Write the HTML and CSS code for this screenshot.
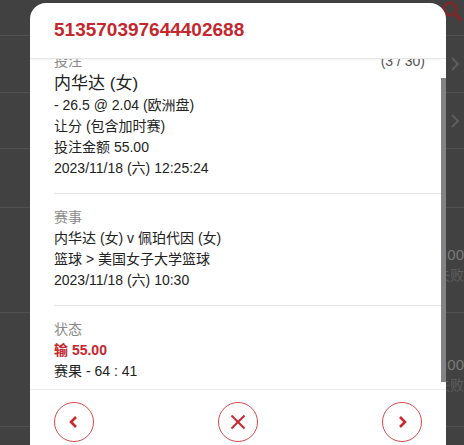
FILE: index.html
```html
<!DOCTYPE html>
<html lang="zh-CN">
<head>
<meta charset="utf-8">
<title>注单详情</title>
<link rel="stylesheet" href="styles.css">
</head>
<body>
<div class="page">
  <div class="topbar">
    <svg class="search" width="22" height="22" viewBox="0 0 22 22"><circle cx="9" cy="8" r="6" fill="none" stroke="#7a2a2c" stroke-width="3"/><line x1="13.5" y1="12.5" x2="19.5" y2="18.5" stroke="#7a2a2c" stroke-width="3.4" stroke-linecap="round"/></svg>
  </div>
  <div class="row r1"><svg class="chev" width="10" height="16" viewBox="0 0 10 16"><polyline points="2,2 8,8 2,14" fill="none" stroke="#5e5e5e" stroke-width="2"/></svg></div>
  <div class="row r2"><svg class="chev" width="10" height="16" viewBox="0 0 10 16"><polyline points="2,2 8,8 2,14" fill="none" stroke="#5e5e5e" stroke-width="2"/></svg></div>
  <div class="row r3"></div>
  <div class="row r4"><div class="amt"><span class="amt-v">0.00</span><span class="amt-s">失败</span></div></div>
  <div class="row r5"><div class="amt"><span class="amt-v">0.00</span><span class="amt-s">失败</span></div></div>
  <div class="row r6"></div>
</div>

<div class="modal">
  <div class="modal-head"><h1 class="ticket">513570397644402688</h1></div>
  <div class="modal-body">
    <div class="scroll" id="scrollArea">
      <section class="sec">
        <div class="sec-top"><span class="label">投注</span><span class="count">(3 / 30)</span></div>
        <div class="big">内华达 (女)</div>
        <div class="line">- 26.5 @ 2.04 (欧洲盘)</div>
        <div class="line">让分 (包含加时赛)</div>
        <div class="line">投注金额 55.00</div>
        <div class="line">2023/11/18 (六) 12:25:24</div>
      </section>
      <section class="sec">
        <div class="label">赛事</div>
        <div class="line">内华达 (女) v 佩珀代因 (女)</div>
        <div class="line">篮球 &gt; 美国女子大学篮球</div>
        <div class="line">2023/11/18 (六) 10:30</div>
      </section>
      <section class="sec last">
        <div class="label">状态</div>
        <div class="line lose">输 55.00</div>
        <div class="line">赛果 - 64 : 41</div>
      </section>
    </div>
    <div class="sbar"><div class="thumb"></div></div>
  </div>
  <div class="modal-foot">
    <button class="circle" aria-label="上一个"><svg width="16" height="16" viewBox="0 0 16 16"><polyline points="10,3 5,8 10,13" fill="none" stroke="#c62a2f" stroke-width="2.6" stroke-linejoin="miter"/></svg></button>
    <button class="circle" aria-label="关闭"><svg width="18" height="18" viewBox="0 0 18 18"><line x1="2.5" y1="2.5" x2="15.5" y2="15.5" stroke="#c62a2f" stroke-width="2"/><line x1="15.5" y1="2.5" x2="2.5" y2="15.5" stroke="#c62a2f" stroke-width="2"/></svg></button>
    <button class="circle" aria-label="下一个"><svg width="16" height="16" viewBox="0 0 16 16"><polyline points="6,3 11,8 6,13" fill="none" stroke="#c62a2f" stroke-width="2.6" stroke-linejoin="miter"/></svg></button>
  </div>
</div>
<script src="script.js"></script>
</body>
</html>
```

FILE: styles.css
```css
* { box-sizing: border-box; }
html, body { margin: 0; padding: 0; }
body {
  width: 464px;
  height: 445px;
  overflow: hidden;
  position: relative;
  background: #414141;
  font-family: "Liberation Sans", "Noto Sans CJK SC", sans-serif;
  font-size: 14px;
  color: #222;
}

/* dimmed background page */
.page { display: flex; flex-direction: column; }
.topbar {
  height: 36px;
  border-bottom: 1px solid #525252;
  display: flex;
  justify-content: flex-end;
  align-items: flex-start;
  padding: 1px 1px 0 0;
}
.row {
  border-bottom: 1px solid #515151;
  display: flex;
  justify-content: flex-end;
  align-items: center;
  padding-right: 4px;
}
.r1 { height: 57px; }
.r2 { height: 56px; }
.r3 { height: 59px; }
.r4 { height: 105px; }
.r5 { height: 114px; }
.r6 { height: 40px; }
.amt {
  display: flex;
  flex-direction: column;
  align-items: flex-end;
  line-height: 20px;
  margin-right: -4px;
  margin-top: 10px;
}
.amt-v { color: #7a7a7a; font-size: 15px; }
.amt-s { color: #5e5e5e; font-size: 14px; }

/* modal */
.modal {
  position: absolute;
  left: 30px;
  top: 3px;
  width: 416px;
  height: 470px;
  background: #fff;
  border-radius: 16px 16px 0 0;
  display: flex;
  flex-direction: column;
}
.modal-head {
  height: 56px;
  flex: none;
  border-bottom: 1px solid #e6e6e6;
  box-shadow: 0 1px 1px rgba(0,0,0,0.04);
  display: flex;
  align-items: center;
  padding: 0 24px 2px;
}
.ticket {
  margin: 0;
  font-size: 19px;
  font-weight: bold;
  color: #c4272d;
}
.modal-body {
  height: 330px;
  flex: none;
  display: flex;
}
.scroll {
  flex: 1;
  overflow: hidden;
}
.sbar {
  width: 5px;
  flex: none;
  background: #fff;
}
.thumb {
  margin-top: 19px;
  height: 304px;
  background: #838383;
}

.sec {
  margin-left: 24px;
  padding: 13px 16px 14px 0;
  border-bottom: 1px solid #e4e4e4;
  line-height: 21px;
}
.sec.last { border-bottom: none; }
.sec-top { display: flex; justify-content: space-between; }
.label { color: #8a8a8a; }
.count { color: #555; }
.big { font-size: 17px; line-height: 23px; color: #222; }
.line { color: #222; }
.lose { color: #c4272d; font-weight: bold; }

.modal-foot {
  flex: none;
  border-top: 1px solid #ececec;
  padding: 12px 24px;
  display: flex;
  justify-content: space-between;
}
.circle {
  width: 40px;
  height: 40px;
  border-radius: 50%;
  border: 1px solid #d24a4e;
  background: #fff;
  padding: 0;
  display: flex;
  align-items: center;
  justify-content: center;
}
```

FILE: script.js
```js
document.getElementById('scrollArea').scrollTop = 21;
```
